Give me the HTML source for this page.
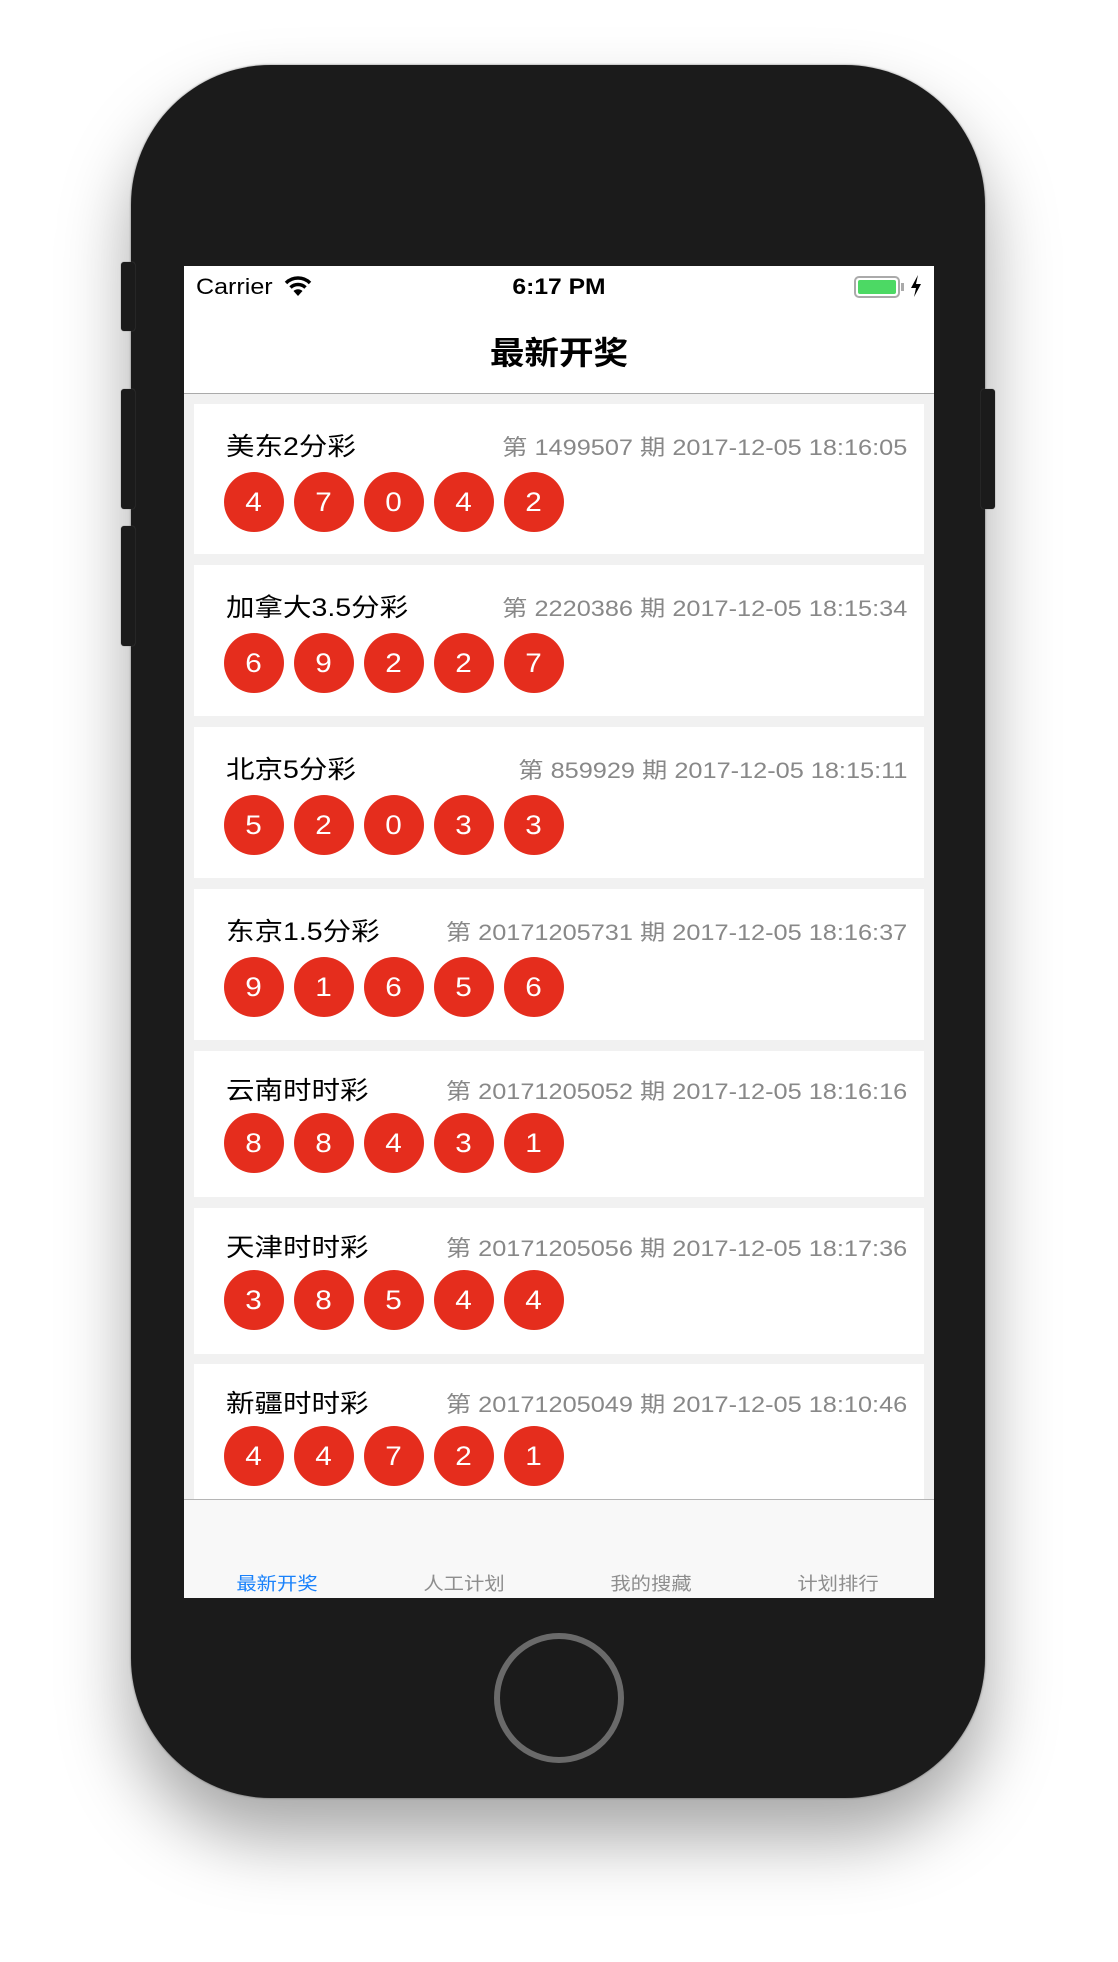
<!DOCTYPE html>
<html><head><meta charset="utf-8"><style>
*{margin:0;padding:0;box-sizing:border-box}
body{width:1118px;height:1962px;background:#fff;position:relative;overflow:hidden;font-family:"Liberation Sans","Noto Sans CJK SC",sans-serif}
.phone{position:absolute;left:131px;top:65px;width:854px;height:1733px;background:#1b1b1b;border-radius:140px;box-shadow:0 40px 70px rgba(0,0,0,.35),0 0 2px #888}
.btn{position:absolute;background:#1b1b1b;border-radius:3px;box-shadow:0 0 1px #666}
.screen{position:absolute;left:184px;top:266px;width:750px;height:1332px;background:#f1f1f1;overflow:hidden}
.status{position:absolute;left:0;top:0;width:750px;height:128px;background:#fff;border-bottom:1px solid #aaa}
.card{position:absolute;left:10px;width:730px;background:#fff}
.t{position:absolute;left:32px;font-size:25px;color:#000;transform:scaleX(1.14);transform-origin:left}
.r{position:absolute;right:17px;font-size:22px;color:#888;transform:scaleX(1.15);transform-origin:right}
.ball{position:absolute;width:60px;height:60px;border-radius:50%;background:#e52d1d;color:#fff;font-size:27px;text-align:center;line-height:60px}
.ball span{display:inline-block;transform:scaleX(1.1)}
.tab{position:absolute;left:0;top:1233px;width:750px;height:99px;background:#f8f8f8;border-top:1px solid #b5b5b5}
.tl{position:absolute;top:70px;font-size:18px;color:#8e8e8e;width:120px;text-align:center;transform:scaleX(1.13)}
</style></head><body>
<div class="phone"></div>
<div class="btn" style="left:121px;top:262px;width:14px;height:69px"></div>
<div class="btn" style="left:121px;top:389px;width:14px;height:120px"></div>
<div class="btn" style="left:121px;top:526px;width:14px;height:120px"></div>
<div class="btn" style="left:981px;top:389px;width:14px;height:120px"></div>
<div style="position:absolute;left:494px;top:1633px;width:130px;height:130px;border:6px solid #6a6a6a;border-radius:50%"></div>
<div class="screen">
<div class="status">
<div style="position:absolute;left:12px;top:8px;font-size:22px;transform:scaleX(1.14);transform-origin:left">Carrier</div>
<svg style="position:absolute;left:100px;top:8px" width="28" height="24" viewBox="0 0 28 24"><path d="M2 9 A17 17 0 0 1 26 9" fill="none" stroke="#000" stroke-width="3.5"/><path d="M6.5 13.5 A11 11 0 0 1 21.5 13.5" fill="none" stroke="#000" stroke-width="3.5"/><path d="M14 22 L9.5 17 A6.5 6.5 0 0 1 18.5 17 Z" fill="#000"/></svg>
<div style="position:absolute;left:0;width:750px;top:8px;text-align:center;font-size:22px;font-weight:bold;transform:scaleX(1.12)">6:17 PM</div>
<div style="position:absolute;left:670px;top:10px;width:46px;height:22px;border:2px solid #aaa;border-radius:5px;padding:2px"><div style="width:100%;height:100%;background:#4cd964;border-radius:2px"></div></div>
<div style="position:absolute;left:717px;top:17px;width:3px;height:8px;background:#aaa"></div>
<svg style="position:absolute;left:726px;top:9px" width="12" height="22" viewBox="0 0 12 22"><path d="M8 0 L1 13 H6 L4 22 L11 9 H6 Z" fill="#000"/></svg>
<div style="position:absolute;left:0;width:750px;top:62px;text-align:center;font-size:32px;font-weight:bold;transform:scaleX(1.08)">最新开奖</div>
</div>
<div class="card" style="top:138px;height:150px"><div class="t" style="top:23px">美东2分彩</div><div class="r" style="top:26px">第 1499507 期 2017-12-05 18:16:05</div>
<div class="ball" style="left:30px;top:68px"><span>4</span></div><div class="ball" style="left:100px;top:68px"><span>7</span></div><div class="ball" style="left:170px;top:68px"><span>0</span></div><div class="ball" style="left:240px;top:68px"><span>4</span></div><div class="ball" style="left:310px;top:68px"><span>2</span></div></div>
<div class="card" style="top:299px;height:151px"><div class="t" style="top:23px">加拿大3.5分彩</div><div class="r" style="top:26px">第 2220386 期 2017-12-05 18:15:34</div>
<div class="ball" style="left:30px;top:68px"><span>6</span></div><div class="ball" style="left:100px;top:68px"><span>9</span></div><div class="ball" style="left:170px;top:68px"><span>2</span></div><div class="ball" style="left:240px;top:68px"><span>2</span></div><div class="ball" style="left:310px;top:68px"><span>7</span></div></div>
<div class="card" style="top:461px;height:151px"><div class="t" style="top:23px">北京5分彩</div><div class="r" style="top:26px">第 859929 期 2017-12-05 18:15:11</div>
<div class="ball" style="left:30px;top:68px"><span>5</span></div><div class="ball" style="left:100px;top:68px"><span>2</span></div><div class="ball" style="left:170px;top:68px"><span>0</span></div><div class="ball" style="left:240px;top:68px"><span>3</span></div><div class="ball" style="left:310px;top:68px"><span>3</span></div></div>
<div class="card" style="top:623px;height:151px"><div class="t" style="top:23px">东京1.5分彩</div><div class="r" style="top:26px">第 20171205731 期 2017-12-05 18:16:37</div>
<div class="ball" style="left:30px;top:68px"><span>9</span></div><div class="ball" style="left:100px;top:68px"><span>1</span></div><div class="ball" style="left:170px;top:68px"><span>6</span></div><div class="ball" style="left:240px;top:68px"><span>5</span></div><div class="ball" style="left:310px;top:68px"><span>6</span></div></div>
<div class="card" style="top:785px;height:146px"><div class="t" style="top:20px">云南时时彩</div><div class="r" style="top:23px">第 20171205052 期 2017-12-05 18:16:16</div>
<div class="ball" style="left:30px;top:62px"><span>8</span></div><div class="ball" style="left:100px;top:62px"><span>8</span></div><div class="ball" style="left:170px;top:62px"><span>4</span></div><div class="ball" style="left:240px;top:62px"><span>3</span></div><div class="ball" style="left:310px;top:62px"><span>1</span></div></div>
<div class="card" style="top:942px;height:146px"><div class="t" style="top:20px">天津时时彩</div><div class="r" style="top:23px">第 20171205056 期 2017-12-05 18:17:36</div>
<div class="ball" style="left:30px;top:62px"><span>3</span></div><div class="ball" style="left:100px;top:62px"><span>8</span></div><div class="ball" style="left:170px;top:62px"><span>5</span></div><div class="ball" style="left:240px;top:62px"><span>4</span></div><div class="ball" style="left:310px;top:62px"><span>4</span></div></div>
<div class="card" style="top:1098px;height:146px"><div class="t" style="top:20px">新疆时时彩</div><div class="r" style="top:23px">第 20171205049 期 2017-12-05 18:10:46</div>
<div class="ball" style="left:30px;top:62px"><span>4</span></div><div class="ball" style="left:100px;top:62px"><span>4</span></div><div class="ball" style="left:170px;top:62px"><span>7</span></div><div class="ball" style="left:240px;top:62px"><span>2</span></div><div class="ball" style="left:310px;top:62px"><span>1</span></div></div>
<div class="tab">
<div class="tl" style="left:33px;color:#1a82fb">最新开奖</div>
<div class="tl" style="left:220px">人工计划</div>
<div class="tl" style="left:407px">我的搜藏</div>
<div class="tl" style="left:594px">计划排行</div>
</div>
</div>
</body></html>
